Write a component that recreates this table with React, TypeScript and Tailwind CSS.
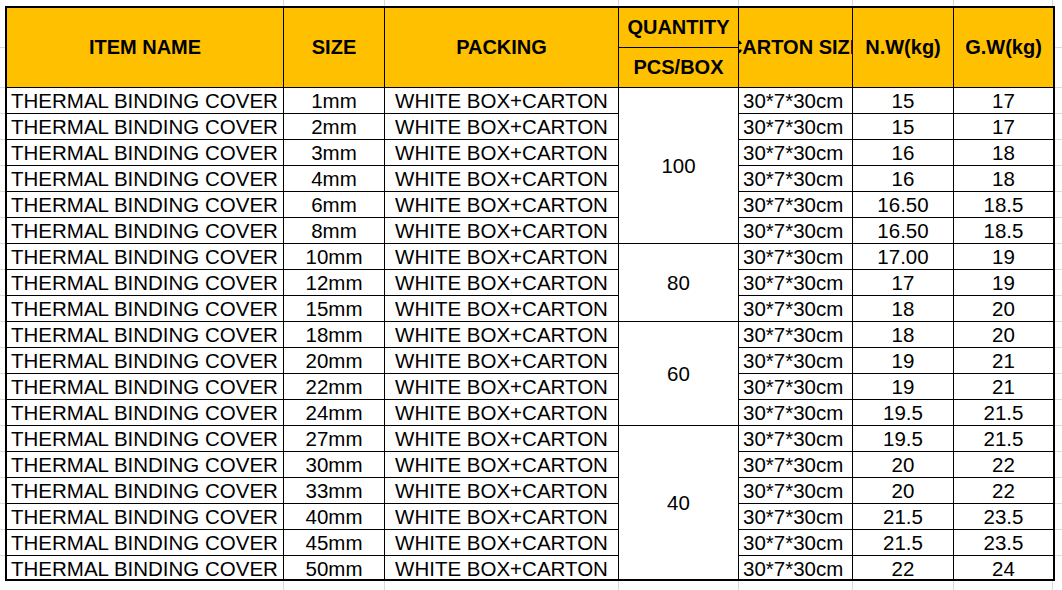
import React from "react";

interface Row {
  size: string;
  nw: string;
  gw: string;
}

const rows: Row[] = [
  { size: "1mm", nw: "15", gw: "17" },
  { size: "2mm", nw: "15", gw: "17" },
  { size: "3mm", nw: "16", gw: "18" },
  { size: "4mm", nw: "16", gw: "18" },
  { size: "6mm", nw: "16.50", gw: "18.5" },
  { size: "8mm", nw: "16.50", gw: "18.5" },
  { size: "10mm", nw: "17.00", gw: "19" },
  { size: "12mm", nw: "17", gw: "19" },
  { size: "15mm", nw: "18", gw: "20" },
  { size: "18mm", nw: "18", gw: "20" },
  { size: "20mm", nw: "19", gw: "21" },
  { size: "22mm", nw: "19", gw: "21" },
  { size: "24mm", nw: "19.5", gw: "21.5" },
  { size: "27mm", nw: "19.5", gw: "21.5" },
  { size: "30mm", nw: "20", gw: "22" },
  { size: "33mm", nw: "20", gw: "22" },
  { size: "40mm", nw: "21.5", gw: "23.5" },
  { size: "45mm", nw: "21.5", gw: "23.5" },
  { size: "50mm", nw: "22", gw: "24" },
];

// quantity merged cells: start row index -> value + span
const qtyGroups: Record<number, { value: string; span: string; last?: boolean }> = {
  0: { value: "100", span: "row-span-6" },
  6: { value: "80", span: "row-span-3" },
  9: { value: "60", span: "row-span-4" },
  13: { value: "40", span: "row-span-6", last: true },
};

const colWidths = ["w-[277px]", "w-[101px]", "w-[234px]", "w-[120px]", "w-[114px]", "w-[101px]", "w-[99px]"];

const ColumnStrip = ({ height }: { height: string }) => (
  <div className={`flex ${height}`}>
    <div className="w-[7px] shrink-0" />
    {colWidths.map((w, i) => (
      <div key={i} className={`${w} shrink-0 border-r border-[#dadada]`} />
    ))}
  </div>
);

const RowStrip = ({ width }: { width: string }) => (
  <div className={`${width} flex flex-col`}>
    <div className="h-[42px] border-b border-[#dadada]" />
    <div className="h-[40px] border-b border-[#dadada]" />
    {rows.slice(0, 18).map((_, i) => (
      <div key={i} className="h-[26px] border-b border-[#dadada]" />
    ))}
  </div>
);

const Head = ({ children, span = "row-span-2", last = false }: { children: React.ReactNode; span?: string; last?: boolean }) => (
  <div
    className={`${span} flex items-center justify-center overflow-hidden whitespace-nowrap bg-[#ffc000] text-[20px] font-bold border-b border-black ${
      last ? "" : "border-r"
    }`}
  >
    <span className="shrink-0">{children}</span>
  </div>
);

export default function App() {
  return (
    <div className="w-[1062px] h-[590px] overflow-hidden bg-white text-black text-[20.5px] font-['Liberation_Sans',Arial,sans-serif]">
      <ColumnStrip height="h-[6px]" />
      <div className="flex">
        <RowStrip width="w-[5px] shrink-0" />
        <div className="w-[1050px] shrink-0 border-2 border-black">
          <div className="grid grid-cols-[277px_101px_234px_120px_114px_101px_99px] grid-rows-[40px_40px_repeat(18,26px)_23px] leading-[25px]">
            <Head>ITEM NAME</Head>
            <Head>SIZE</Head>
            <Head>PACKING</Head>
            <Head span="row-span-1">QUANTITY</Head>
            <Head>CARTON SIZE</Head>
            <Head>N.W(kg)</Head>
            <Head last>G.W(kg)</Head>
            <Head span="row-span-1">PCS/BOX</Head>

            {rows.map((r, i) => {
              const isLast = i === rows.length - 1;
              const b = isLast ? "" : "border-b";
              const group = qtyGroups[i];
              return (
                <React.Fragment key={r.size}>
                  <div className={`pl-[4px] whitespace-nowrap border-r border-black ${b}`}>THERMAL BINDING COVER</div>
                  <div className={`text-center border-r border-black ${b}`}>{r.size}</div>
                  <div className={`text-center border-r border-black ${b}`}>WHITE BOX+CARTON</div>
                  {group && (
                    <div
                      className={`${group.span} flex items-center justify-center border-r border-black ${
                        group.last ? "" : "border-b"
                      }`}
                    >
                      {group.value}
                    </div>
                  )}
                  <div className={`pl-[4px] whitespace-nowrap border-r border-black ${b}`}>30*7*30cm</div>
                  <div className={`text-center border-r border-black ${b}`}>{r.nw}</div>
                  <div className={`text-center border-black ${b}`}>{r.gw}</div>
                </React.Fragment>
              );
            })}
          </div>
        </div>
        <RowStrip width="flex-1" />
      </div>
      <ColumnStrip height="h-[10px]" />
    </div>
  );
}
